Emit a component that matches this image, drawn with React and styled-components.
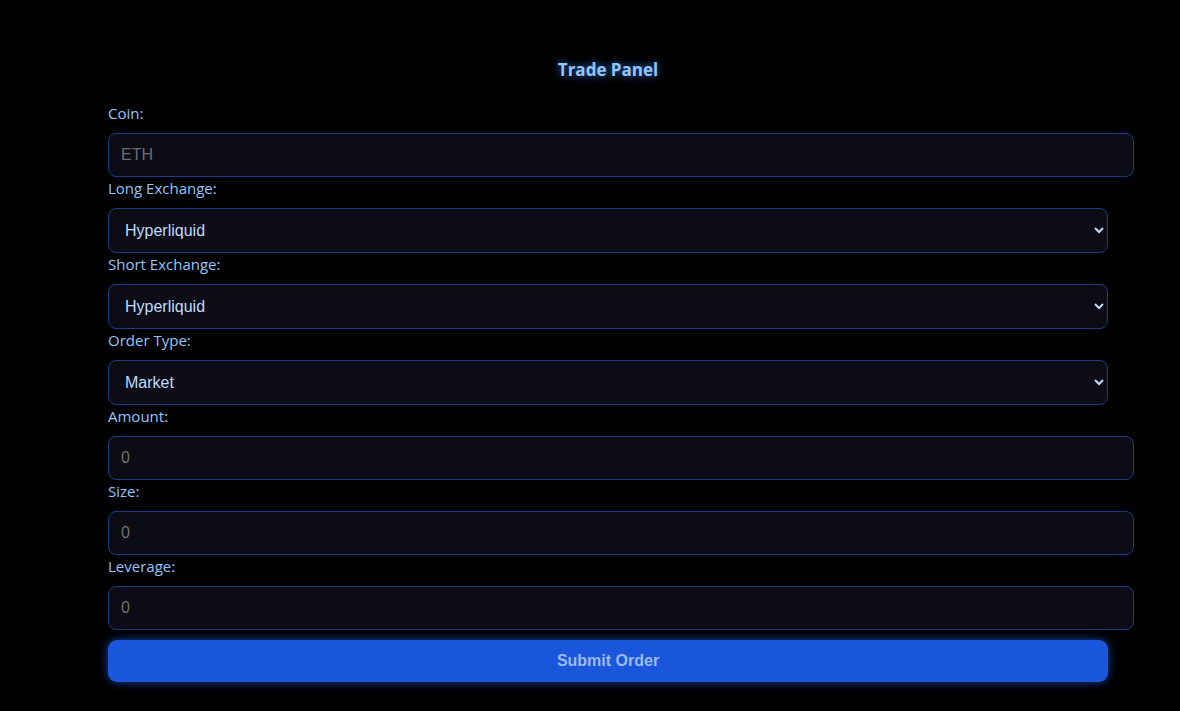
import { createGlobalStyle, styled } from "styled-components";

const GlobalStyle = createGlobalStyle`
  html, body {
    margin: 0;
    padding: 0;
    background: #000;
  }
  body {
    font-family: "Open Sans", "Noto Sans", sans-serif;
  }
`;

const fields = [
  { id: "coin", label: "Coin:", kind: "input", placeholder: "ETH" },
  { id: "long", label: "Long Exchange:", kind: "select", options: ["Hyperliquid"] },
  { id: "short", label: "Short Exchange:", kind: "select", options: ["Hyperliquid"] },
  { id: "type", label: "Order Type:", kind: "select", options: ["Market"] },
  { id: "amount", label: "Amount:", kind: "input", placeholder: "0", dim: true },
  { id: "size", label: "Size:", kind: "input", placeholder: "0", dim: true },
  { id: "leverage", label: "Leverage:", kind: "input", placeholder: "0", dim: true },
];

const App = () => {
  return (
    <>
      <GlobalStyle />
      <S.Wrapper>
        <S.Panel>
          <S.Title>Trade Panel</S.Title>
          <S.Form onSubmit={(e) => e.preventDefault()}>
            {fields.map((f) => (
              <S.Field key={f.id}>
                <S.Label htmlFor={f.id}>{f.label}</S.Label>
                {f.kind === "input" ? (
                  <S.Input id={f.id} placeholder={f.placeholder} $dim={f.dim} />
                ) : (
                  <S.Select id={f.id}>
                    {f.options.map((o) => (
                      <option key={o}>{o}</option>
                    ))}
                  </S.Select>
                )}
              </S.Field>
            ))}
            <S.Button type="submit">Submit Order</S.Button>
          </S.Form>
        </S.Panel>
      </S.Wrapper>
    </>
  );
};
export default App;

const Wrapper = styled.div`
  min-height: 100vh;
  background: #000;
  padding: 57px 0 0 108px;
  box-sizing: border-box;
`;

const Panel = styled.div`
  width: 1000px;
`;

const Title = styled.h2`
  margin: 0 0 19px;
  text-align: center;
  font-size: 17px;
  line-height: 26px;
  font-weight: 700;
  color: #93c5fd;
  text-shadow: 0 0 8px rgba(59, 130, 246, 0.9);
`;

const Form = styled.form`
  display: flex;
  flex-direction: column;
`;

const Field = styled.div`
  display: flex;
  flex-direction: column;
  align-items: flex-start;
`;

const Label = styled.label`
  display: block;
  font-size: 15px;
  line-height: 22px;
  color: #93c5fd;
  margin-bottom: 9px;
`;

const controlBase = `
  font-family: "Liberation Sans", Arial, sans-serif;
  font-size: 16px;
  background: #0b0c16;
  border: 1px solid #1e3a80;
  border-radius: 8px;
  outline: none;
`;

const Input = styled.input`
  ${controlBase};
  width: 1000px;
  height: 18px;
  line-height: 18px;
  padding: 12px 12px;
  box-sizing: content-box;
  color: #bfdbfe;
  &::placeholder {
    color: ${({ $dim }) => ($dim ? "#75706a" : "#6b6b70")};
  }
`;

const Select = styled.select`
  ${controlBase};
  width: 1000px;
  height: 45px;
  padding: 0 12px;
  box-sizing: border-box;
  color: #bfdbfe;
  color-scheme: dark;
`;

const Button = styled.button`
  margin-top: 10px;
  width: 1000px;
  height: 42px;
  border: none;
  border-radius: 9px;
  background: #1a56db;
  color: #9dbaf6;
  font-family: "Liberation Sans", Arial, sans-serif;
  font-size: 16px;
  font-weight: 700;
  box-shadow: 0 0 10px rgba(37, 99, 235, 0.7);
  cursor: pointer;
`;

const S = {
  Wrapper,
  Panel,
  Title,
  Form,
  Field,
  Label,
  Input,
  Select,
  Button,
};
